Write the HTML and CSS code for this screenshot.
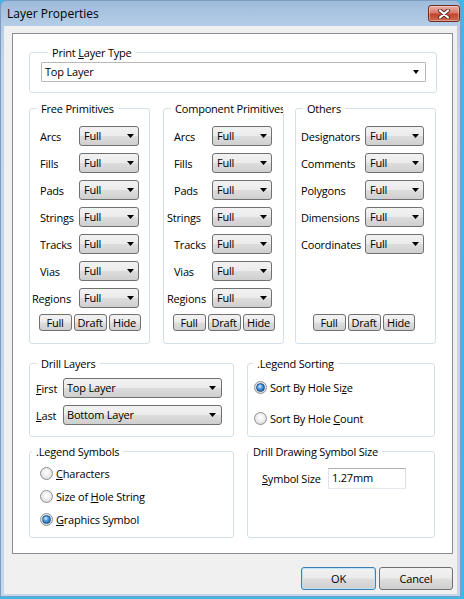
FILE: index.html
```html
<!DOCTYPE html>
<html>
<head>
<meta charset="utf-8">
<link rel="stylesheet" href="styles.css">
</head>
<body>
<div class="window">
  <div class="titlebar">
    <span class="title">Layer Properties</span>
    <div class="close">
      <svg width="12" height="10" viewBox="0 0 12 10"><path d="M2 1.5L10 8.5M10 1.5L2 8.5" stroke="#5a2a22" stroke-width="4" stroke-linecap="round"/><path d="M2 1.5L10 8.5M10 1.5L2 8.5" stroke="#fff" stroke-width="2.2" stroke-linecap="round"/></svg>
    </div>
  </div>
  <div class="client">
    <div class="panel">
      <div class="group g-print">
        <div class="gtitle">Print <u>L</u>ayer Type</div>
        <div class="combo white wide"><span>Top Layer</span><i class="arr"></i></div>
      </div>

      <div class="row-prims">
        <div class="group prim g-free">
          <div class="gtitle">Free Primitives</div>
          <div class="rows">
            <div class="prow"><span class="lbl">Arcs</span><div class="combo"><span>Full</span><i class="arr"></i></div></div>
            <div class="prow"><span class="lbl">Fills</span><div class="combo"><span>Full</span><i class="arr"></i></div></div>
            <div class="prow"><span class="lbl">Pads</span><div class="combo"><span>Full</span><i class="arr"></i></div></div>
            <div class="prow"><span class="lbl">Strings</span><div class="combo"><span>Full</span><i class="arr"></i></div></div>
            <div class="prow"><span class="lbl">Tracks</span><div class="combo"><span>Full</span><i class="arr"></i></div></div>
            <div class="prow"><span class="lbl">Vias</span><div class="combo"><span>Full</span><i class="arr"></i></div></div>
            <div class="prow"><span class="lbl shift8">Regions</span><div class="combo"><span>Full</span><i class="arr"></i></div></div>
          </div>
          <div class="btns"><div class="btn b-full">Full</div><div class="btn b-draft">Draft</div><div class="btn b-hide">Hide</div></div>
        </div>

        <div class="group prim g-comp">
          <div class="gtitle">Component Primitives</div>
          <div class="rows">
            <div class="prow"><span class="lbl">Arcs</span><div class="combo"><span>Full</span><i class="arr"></i></div></div>
            <div class="prow"><span class="lbl">Fills</span><div class="combo"><span>Full</span><i class="arr"></i></div></div>
            <div class="prow"><span class="lbl">Pads</span><div class="combo"><span>Full</span><i class="arr"></i></div></div>
            <div class="prow"><span class="lbl shift7">Strings</span><div class="combo"><span>Full</span><i class="arr"></i></div></div>
            <div class="prow"><span class="lbl">Tracks</span><div class="combo"><span>Full</span><i class="arr"></i></div></div>
            <div class="prow"><span class="lbl">Vias</span><div class="combo"><span>Full</span><i class="arr"></i></div></div>
            <div class="prow"><span class="lbl shift7">Regions</span><div class="combo"><span>Full</span><i class="arr"></i></div></div>
          </div>
          <div class="btns"><div class="btn b-full">Full</div><div class="btn b-draft">Draft</div><div class="btn b-hide">Hide</div></div>
        </div>

        <div class="group prim g-oth">
          <div class="gtitle">Others</div>
          <div class="rows">
            <div class="prow"><span class="lbl">Designators</span><div class="combo"><span>Full</span><i class="arr"></i></div></div>
            <div class="prow"><span class="lbl">Comments</span><div class="combo"><span>Full</span><i class="arr"></i></div></div>
            <div class="prow"><span class="lbl">Polygons</span><div class="combo"><span>Full</span><i class="arr"></i></div></div>
            <div class="prow"><span class="lbl">Dimensions</span><div class="combo"><span>Full</span><i class="arr"></i></div></div>
            <div class="prow"><span class="lbl">Coordinates</span><div class="combo"><span>Full</span><i class="arr"></i></div></div>
          </div>
          <div class="btns"><div class="btn b-full">Full</div><div class="btn b-draft">Draft</div><div class="btn b-hide">Hide</div></div>
        </div>
      </div>

      <div class="row-two r2">
        <div class="group g-left g-drill">
          <div class="gtitle">Drill Layers</div>
          <div class="drow"><span class="dlbl"><u>F</u>irst</span><div class="combo dcombo"><span>Top Layer</span><i class="arr"></i></div></div>
          <div class="drow"><span class="dlbl"><u>L</u>ast</span><div class="combo dcombo"><span>Bottom Layer</span><i class="arr"></i></div></div>
        </div>
        <div class="group g-right g-sort">
          <div class="gtitle t-sort">.Le<u>g</u>end Sorting</div>
          <div class="rrow first"><span class="radio on"></span><span>Sort By Hole Si<u>z</u>e</span></div>
          <div class="rrow second"><span class="radio"></span><span>Sort By Hole <u>C</u>ount</span></div>
        </div>
      </div>

      <div class="row-two r3">
        <div class="group g-left g-sym">
          <div class="gtitle t-sym">.Legend Symbols</div>
          <div class="srow"><span class="radio"></span><span><u>C</u>haracters</span></div>
          <div class="srow"><span class="radio"></span><span>Size of <u>H</u>ole String</span></div>
          <div class="srow"><span class="radio on"></span><span><u>G</u>raphics Symbol</span></div>
        </div>
        <div class="group g-right g-dd">
          <div class="gtitle t-dd">Drill Drawing Symbol Size</div>
          <div class="irow"><span class="ilbl"><u>S</u>ymbol Size</span><div class="input">1.27mm</div></div>
        </div>
      </div>
    </div>

    <div class="actions">
      <div class="pbtn ok">OK</div>
      <div class="pbtn cancel">Cancel</div>
    </div>
  </div>
</div>
</body>
</html>
```

FILE: styles.css
```css
* { box-sizing: border-box; }
html, body { margin: 0; padding: 0; }
body {
  width: 464px;
  height: 599px;
  overflow: hidden;
  background: #3bb9ea;
  font-family: "Open Sans", "Noto Sans", sans-serif;
  font-size: 11px;
  letter-spacing: -0.2px;
  color: #000;
}
u { text-decoration: underline; text-underline-offset: 1px; }

.window {
  width: 461px;
  height: 597px;
  border: 1px solid #7d9cc0;
  border-radius: 6px 6px 0 0;
  background: linear-gradient(#9fbbdb 0, #b4cce6 24px, #bfd5ec 60px, #c3d8ee 100%);
  display: flex;
  flex-direction: column;
}

.titlebar {
  height: 25px;
  display: flex;
  align-items: flex-start;
  justify-content: space-between;
}
.title {
  font-size: 12px;
  letter-spacing: 0;
  line-height: 16px;
  padding: 5px 0 0 6px;
}
.close {
  width: 32px;
  height: 17px;
  margin-top: 4px;
  border: 1px solid #6e2a20;
  border-radius: 3px;
  background: linear-gradient(#eab1a5 0, #d9786a 45%, #c4422d 55%, #cf6b4c 100%);
  box-shadow: inset 0 0 0 1px rgba(255,255,255,0.35);
  display: flex;
  align-items: center;
  justify-content: center;
}
.close svg { display: block; }

.client {
  flex: 1;
  margin: 0 3px 2px 3px;
  background: #f0f0f0;
  padding: 7px 4px 0 8px;
  display: flex;
  flex-direction: column;
}

.panel {
  width: 441px;
  height: 521px;
  border: 1px solid #8a8d93;
  background: #fff;
  padding: 18px 0 0 16px;
}

.group {
  border: 1px solid #d5dfe5;
  border-radius: 3px;
  display: flex;
  flex-direction: column;
}
.gtitle {
  align-self: flex-start;
  height: 15px;
  line-height: 15px;
  margin: -8px 0 0 7px;
  padding: 0 4px;
  background: #fff;
  white-space: nowrap;
  overflow: hidden;
  max-width: calc(100% - 7px);
}

/* Print layer type */
.g-print {
  width: 408px;
  height: 41px;
  padding: 0 10px 0 11px;
}
.g-print .combo { margin-top: 2px; }

/* combos */
.combo {
  height: 20px;
  border: 1px solid #707070;
  border-radius: 3px;
  background: linear-gradient(#f2f2f2 0, #ebebeb 48%, #dddddd 52%, #cfcfcf 100%);
  display: flex;
  align-items: center;
  justify-content: space-between;
  padding: 0 4px 0 4px;
  line-height: 16px;
  flex: none;
}
.combo.white {
  background: #fff;
  border-color: #b9b9b9;
  border-radius: 1px;
  padding: 0 6px 0 3px;
}
.arr {
  display: block;
  width: 7px;
  height: 4px;
  background: #000;
  clip-path: polygon(0 0, 100% 0, 50% 100%);
}
.combo.white .arr { width: 6px; height: 4px; }

/* primitives row */
.row-prims {
  display: flex;
  margin-top: 15px;
}
.prim { height: 236px; }
.g-free { width: 121px; }
.g-comp { width: 121px; margin-left: 13px; }
.g-oth { width: 141px; margin-left: 11px; }

.rows {
  margin-top: 10px;
  display: flex;
  flex-direction: column;
  gap: 7px;
}
.prow {
  display: flex;
  align-items: center;
  height: 20px;
  white-space: nowrap;
}
.g-free .prow { padding-left: 10px; }
.g-free .lbl { width: 39px; }
.g-comp .prow { padding-left: 10px; }
.g-comp .lbl { width: 38px; }
.g-oth .prow { padding-left: 5px; }
.g-oth .lbl { width: 64px; }
.lbl.shift8 { margin-left: -8px; width: 47px; }
.g-comp .lbl.shift7 { margin-left: -7px; width: 45px; }
.prim .combo { width: 60px; }
.g-oth .combo { width: 59px; }

.btns {
  margin-top: auto;
  padding-bottom: 12px;
  display: flex;
  justify-content: center;
  gap: 2px;
}
.g-oth .btns { padding-right: 4px; }
.btn {
  height: 17px;
  width: 33px;
  border: 1px solid #707070;
  border-radius: 3px;
  background: linear-gradient(#f2f2f2 0, #ebebeb 48%, #dddddd 52%, #cfcfcf 100%);
  text-align: center;
  line-height: 15px;
}
.b-hide { width: 32px; }

/* two-column rows */
.row-two { display: flex; }
.r2 { margin-top: 19px; }
.r3 { margin-top: 14px; }
.g-left { width: 205px; }
.g-right { width: 188px; margin-left: 13px; }
.r2 .group { height: 74px; }
.r3 .group { height: 87px; }

.drow {
  display: flex;
  align-items: center;
  height: 20px;
  padding-left: 6px;
}
.drow:nth-of-type(2) { margin-top: 7px; }
.drow + .drow { margin-top: 7px; }
.g-drill .drow:first-of-type { margin-top: 7px; }
.dlbl { width: 27px; }
.dcombo { width: 159px; padding: 0 5px 0 3px; }

.t-sort { margin-left: 5px; }
.t-sym { margin-left: 2px; }
.t-dd { margin-left: 1px; }

.rrow, .srow {
  display: flex;
  align-items: center;
  height: 15px;
  line-height: 15px;
  gap: 3px;
  white-space: nowrap;
}
.rrow { padding-left: 6px; }
.rrow.first { margin-top: 9px; }
.rrow.second { margin-top: 16px; }
.srow { padding-left: 10px; margin-top: 8px; }
.srow:first-of-type { margin-top: 7px; }
.g-sym .gtitle + .srow { margin-top: 7px; }

.radio {
  width: 13px;
  height: 13px;
  flex: none;
  border-radius: 50%;
  border: 1px solid #8c8f94;
  background: radial-gradient(circle at 50% 40%, #ffffff 0, #eeeeee 45%, #cfd0d2 100%);
  display: flex;
  align-items: center;
  justify-content: center;
}
.radio.on::after {
  content: "";
  width: 7px;
  height: 7px;
  border-radius: 50%;
  background: radial-gradient(circle at 40% 35%, #d6efff 0, #4c9be0 40%, #12528f 100%);
  border: 0.5px solid #1b4f86;
}

.irow {
  display: flex;
  align-items: center;
  margin-top: 9px;
  padding-left: 14px;
}
.ilbl { width: 66px; }
.input {
  width: 78px;
  height: 21px;
  border: 1px solid #abadb3;
  border-color: #abadb3 #dbdfe6 #e3e9ef #e2e3ea;
  background: #fff;
  padding-left: 3px;
  line-height: 18px;
}

/* bottom buttons */
.actions {
  display: flex;
  justify-content: flex-end;
  gap: 3px;
  margin-top: 13px;
}
.pbtn {
  height: 23px;
  border: 1px solid #707070;
  border-radius: 3px;
  background: linear-gradient(#f2f2f2 0, #ebebeb 48%, #dddddd 52%, #cfcfcf 100%);
  text-align: center;
  line-height: 21px;
}
.ok {
  width: 75px;
  border-color: #3c7fb1;
  box-shadow: inset 0 0 0 1px #bfe3f7;
}
.cancel { width: 74px; }
```
